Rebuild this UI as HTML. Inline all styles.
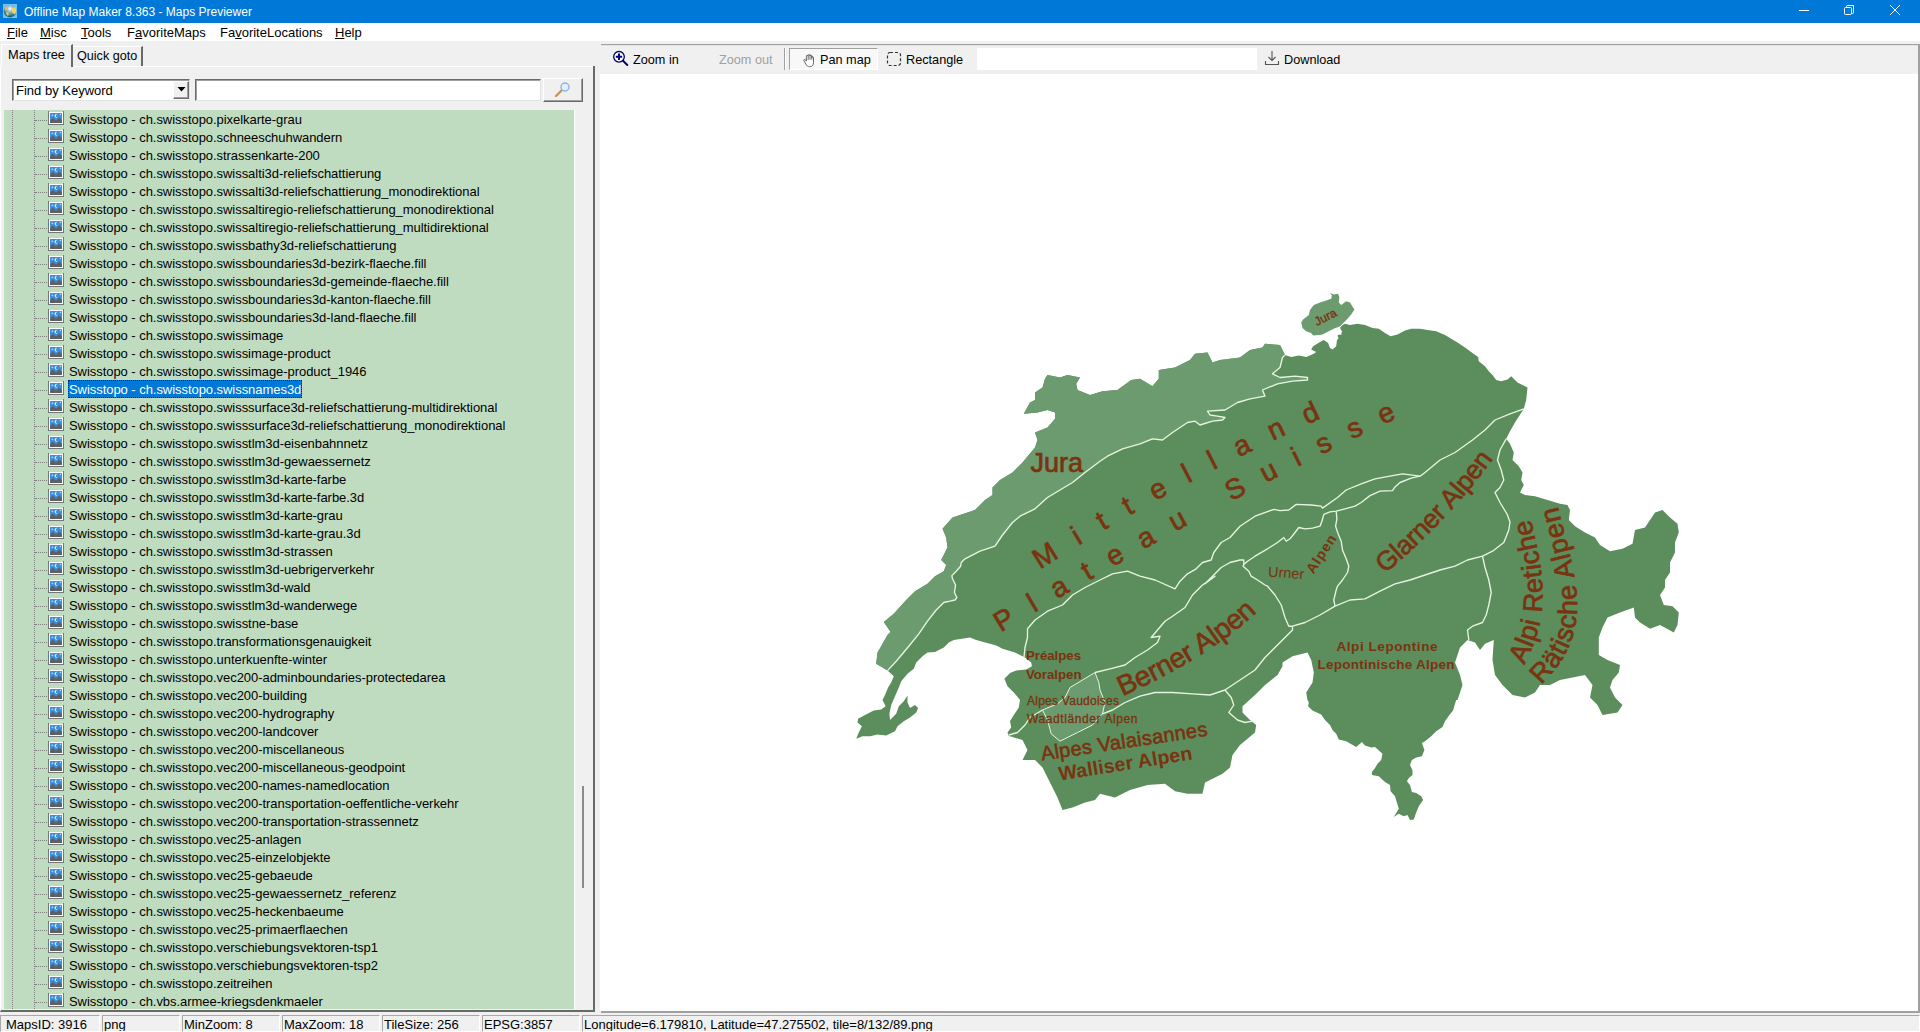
<!DOCTYPE html>
<html><head><meta charset="utf-8"><title>Offline Map Maker 8.363 - Maps Previewer</title>
<style>
html,body{margin:0;padding:0;}
body{width:1920px;height:1032px;overflow:hidden;background:#f0f0f0;font-family:"Liberation Sans",sans-serif;font-size:13px;color:#000;position:relative;}
.abs{position:absolute;}
#title{left:0;top:0;width:1920px;height:23px;background:#0078d7;color:#fff;}
#title .t{position:absolute;left:24px;top:5px;font-size:12px;white-space:nowrap;}
#menu{left:0;top:23px;width:1920px;height:18px;background:#fff;}
#menu span{position:absolute;top:2px;white-space:nowrap;font-size:13px;}
#menu u{text-decoration:underline;}
.row{position:absolute;left:0;width:570px;height:18px;white-space:nowrap;}
.row .ic{position:absolute;left:44px;top:1px;}
.row .hl{position:absolute;left:31px;top:10px;width:12px;height:0;border-top:1px dotted #808080;}
.row .lbl{letter-spacing:-0.05px;position:absolute;left:64px;top:0;height:18px;line-height:20px;overflow:hidden;padding:0 1px;font-size:13px;}
.row .lbl.sel{background:#0078d7;color:#fff;outline:1px dotted #223;outline-offset:-1px;}
#status span{position:absolute;top:2px;white-space:nowrap;font-size:13px;}
.sep{position:absolute;top:1016px;width:1px;height:15px;background:#d0d0d0;}
</style></head><body>
<svg width="0" height="0" style="position:absolute"><defs>
<g id="pic"><rect x="0.5" y="0.5" width="15" height="13" fill="#fbfdff" stroke="#747678"/><path d="M1 0.500 H15" stroke="#c4d4d8" stroke-width="1"/><rect x="2" y="2" width="12" height="10" fill="#3e8dd6"/><path d="M2 12 L2 9.800 L4.800 6.400 L8 9.800 L9.600 8.200 L11.200 6.400 L14 9.600 L14 12 Z" fill="#5c6063"/><path d="M9.600 3 A2 2 0 1 0 9.600 6.400 A1.500 1.500 0 1 1 9.600 3 Z" fill="#c8ecff"/><rect x="3.500" y="3.500" width="1.600" height="1.600" fill="#8fd0ff" transform="rotate(45 4.300 4.300)"/><rect x="11.800" y="2.800" width="1.400" height="1.400" fill="#a8dcff"/></g>
</defs></svg>

<div id="title" class="abs"><span class="t">Offline Map Maker 8.363 - Maps Previewer</span>
<svg class="abs" style="left:3px;top:4px" width="14" height="14" viewBox="0 0 14 14"><defs><radialGradient id="gl" cx="0.5" cy="0.3" r="0.65"><stop offset="0" stop-color="#ffffff"/><stop offset="0.35" stop-color="#8cc4e8"/><stop offset="1" stop-color="#1d5c78"/></radialGradient></defs><rect width="14" height="14" fill="#6fc2f2"/><circle cx="7" cy="7.200" r="6.200" fill="url(#gl)"/><path d="M1.500 3.500 L4.500 2 L5.500 4 L3.500 6.500 L1.500 6 Z" fill="#f0b458"/><path d="M9 4 L12.500 3 L13.300 7 L12 10.500 L9.500 9 L8.800 6 Z" fill="#f6d458"/><path d="M3.500 8 L5.500 8.500 L5.800 11 L4.500 11.800 L3 10 Z" fill="#d8cc58"/></svg>
<svg class="abs" style="left:1780px;top:0" width="140" height="23" viewBox="0 0 140 23"><g stroke="#fff" stroke-width="1" fill="none"><path d="M19 10.5 H29"/><rect x="64.5" y="7.5" width="7" height="7" rx="1"/><path d="M66.5 7.5 V6.5 a1 1 0 0 1 1 -1 H73.500 V12.500 a1 1 0 0 1 -1 1 H71.500"/><path d="M110 5 L120 15 M120 5 L110 15"/></g></svg>
</div>
<div id="menu" class="abs">
<span style="left:7px"><u>F</u>ile</span><span style="left:40px"><u>M</u>isc</span><span style="left:81px"><u>T</u>ools</span><span style="left:127px">F<u>a</u>voriteMaps</span><span style="left:220px">Fa<u>v</u>oriteLocations</span><span style="left:335px"><u>H</u>elp</span>
</div>

<!-- tabs -->
<div class="abs" style="left:1px;top:44px;width:72px;height:23px;background:#f0f0f0;border-right:2px solid #696969;box-sizing:border-box;border-left:1px solid #fff;border-top:1px solid #fff;"></div>
<span class="abs" style="left:8px;top:47px;font-size:12.8px;white-space:nowrap">Maps tree</span>
<div class="abs" style="left:73px;top:46px;width:70px;height:20px;box-sizing:border-box;border-right:2px solid #696969;border-top:1px solid #fff;"></div>
<span class="abs" style="left:77px;top:49px;font-size:12.6px;white-space:nowrap">Quick goto</span>

<!-- left panel frame -->
<div class="abs" style="left:0;top:66px;width:595px;height:946px;box-sizing:border-box;border-left:1px solid #fff;border-right:2px solid #696969;border-bottom:2px solid #696969;"></div>
<div class="abs" style="left:74px;top:66px;width:519px;height:1px;background:#fff"></div>

<!-- combo -->
<div class="abs" style="left:12px;top:79px;width:178px;height:22px;box-sizing:border-box;background:#fff;border:1px solid #696969;border-right-color:#e3e3e3;border-bottom-color:#e3e3e3;box-shadow:inset 1px 1px 0 #a0a0a0;"></div>
<span class="abs" style="left:16px;top:83px;font-size:13px;white-space:nowrap">Find by Keyword</span>
<div class="abs" style="left:173px;top:81px;width:16px;height:18px;box-sizing:border-box;background:#f0f0f0;border:1px solid #fff;border-right-color:#696969;border-bottom-color:#696969;box-shadow:inset -1px -1px 0 #a0a0a0;"></div>
<svg class="abs" style="left:177px;top:87px" width="9" height="5" viewBox="0 0 9 5"><path d="M0.5 0 H8.5 L4.5 4.5 Z" fill="#000"/></svg>
<!-- search input -->
<div class="abs" style="left:195px;top:79px;width:346px;height:22px;box-sizing:border-box;background:#fff;border:1px solid #696969;border-right-color:#e3e3e3;border-bottom-color:#e3e3e3;box-shadow:inset 1px 1px 0 #a0a0a0;"></div>
<!-- search btn -->
<div class="abs" style="left:543px;top:78px;width:40px;height:24px;box-sizing:border-box;background:#f0f0f0;border:1px solid #fff;border-right-color:#696969;border-bottom-color:#696969;box-shadow:inset -1px -1px 0 #a0a0a0;"></div>
<svg class="abs" style="left:554px;top:81px" width="18" height="18" viewBox="0 0 18 18"><path d="M2 15 L8 9" stroke="#c9945a" stroke-width="2.4" stroke-linecap="round"/><circle cx="11" cy="6" r="4" fill="#dff0ff" stroke="#8fb4e0" stroke-width="1.4"/></svg>

<!-- tree -->
<div id="tree" class="abs" style="left:4px;top:110px;width:570px;height:899px;background:#c0dcc0;overflow:hidden;">
<div class="abs" style="left:8px;top:0;width:0;height:899px;border-left:1px dotted #808080"></div>
<div class="abs" style="left:30px;top:0;width:0;height:899px;border-left:1px dotted #808080"></div>
<div class="row" style="top:0px"><i class="hl"></i><svg class="ic" width="16" height="14" viewBox="0 0 16 14"><use href="#pic"/></svg><span class="lbl">Swisstopo - ch.swisstopo.pixelkarte-grau</span></div>
<div class="row" style="top:18px"><i class="hl"></i><svg class="ic" width="16" height="14" viewBox="0 0 16 14"><use href="#pic"/></svg><span class="lbl">Swisstopo - ch.swisstopo.schneeschuhwandern</span></div>
<div class="row" style="top:36px"><i class="hl"></i><svg class="ic" width="16" height="14" viewBox="0 0 16 14"><use href="#pic"/></svg><span class="lbl">Swisstopo - ch.swisstopo.strassenkarte-200</span></div>
<div class="row" style="top:54px"><i class="hl"></i><svg class="ic" width="16" height="14" viewBox="0 0 16 14"><use href="#pic"/></svg><span class="lbl">Swisstopo - ch.swisstopo.swissalti3d-reliefschattierung</span></div>
<div class="row" style="top:72px"><i class="hl"></i><svg class="ic" width="16" height="14" viewBox="0 0 16 14"><use href="#pic"/></svg><span class="lbl">Swisstopo - ch.swisstopo.swissalti3d-reliefschattierung_monodirektional</span></div>
<div class="row" style="top:90px"><i class="hl"></i><svg class="ic" width="16" height="14" viewBox="0 0 16 14"><use href="#pic"/></svg><span class="lbl">Swisstopo - ch.swisstopo.swissaltiregio-reliefschattierung_monodirektional</span></div>
<div class="row" style="top:108px"><i class="hl"></i><svg class="ic" width="16" height="14" viewBox="0 0 16 14"><use href="#pic"/></svg><span class="lbl">Swisstopo - ch.swisstopo.swissaltiregio-reliefschattierung_multidirektional</span></div>
<div class="row" style="top:126px"><i class="hl"></i><svg class="ic" width="16" height="14" viewBox="0 0 16 14"><use href="#pic"/></svg><span class="lbl">Swisstopo - ch.swisstopo.swissbathy3d-reliefschattierung</span></div>
<div class="row" style="top:144px"><i class="hl"></i><svg class="ic" width="16" height="14" viewBox="0 0 16 14"><use href="#pic"/></svg><span class="lbl">Swisstopo - ch.swisstopo.swissboundaries3d-bezirk-flaeche.fill</span></div>
<div class="row" style="top:162px"><i class="hl"></i><svg class="ic" width="16" height="14" viewBox="0 0 16 14"><use href="#pic"/></svg><span class="lbl">Swisstopo - ch.swisstopo.swissboundaries3d-gemeinde-flaeche.fill</span></div>
<div class="row" style="top:180px"><i class="hl"></i><svg class="ic" width="16" height="14" viewBox="0 0 16 14"><use href="#pic"/></svg><span class="lbl">Swisstopo - ch.swisstopo.swissboundaries3d-kanton-flaeche.fill</span></div>
<div class="row" style="top:198px"><i class="hl"></i><svg class="ic" width="16" height="14" viewBox="0 0 16 14"><use href="#pic"/></svg><span class="lbl">Swisstopo - ch.swisstopo.swissboundaries3d-land-flaeche.fill</span></div>
<div class="row" style="top:216px"><i class="hl"></i><svg class="ic" width="16" height="14" viewBox="0 0 16 14"><use href="#pic"/></svg><span class="lbl">Swisstopo - ch.swisstopo.swissimage</span></div>
<div class="row" style="top:234px"><i class="hl"></i><svg class="ic" width="16" height="14" viewBox="0 0 16 14"><use href="#pic"/></svg><span class="lbl">Swisstopo - ch.swisstopo.swissimage-product</span></div>
<div class="row" style="top:252px"><i class="hl"></i><svg class="ic" width="16" height="14" viewBox="0 0 16 14"><use href="#pic"/></svg><span class="lbl">Swisstopo - ch.swisstopo.swissimage-product_1946</span></div>
<div class="row" style="top:270px"><i class="hl"></i><svg class="ic" width="16" height="14" viewBox="0 0 16 14"><use href="#pic"/></svg><span class="lbl sel">Swisstopo - ch.swisstopo.swissnames3d</span></div>
<div class="row" style="top:288px"><i class="hl"></i><svg class="ic" width="16" height="14" viewBox="0 0 16 14"><use href="#pic"/></svg><span class="lbl">Swisstopo - ch.swisstopo.swisssurface3d-reliefschattierung-multidirektional</span></div>
<div class="row" style="top:306px"><i class="hl"></i><svg class="ic" width="16" height="14" viewBox="0 0 16 14"><use href="#pic"/></svg><span class="lbl">Swisstopo - ch.swisstopo.swisssurface3d-reliefschattierung_monodirektional</span></div>
<div class="row" style="top:324px"><i class="hl"></i><svg class="ic" width="16" height="14" viewBox="0 0 16 14"><use href="#pic"/></svg><span class="lbl">Swisstopo - ch.swisstopo.swisstlm3d-eisenbahnnetz</span></div>
<div class="row" style="top:342px"><i class="hl"></i><svg class="ic" width="16" height="14" viewBox="0 0 16 14"><use href="#pic"/></svg><span class="lbl">Swisstopo - ch.swisstopo.swisstlm3d-gewaessernetz</span></div>
<div class="row" style="top:360px"><i class="hl"></i><svg class="ic" width="16" height="14" viewBox="0 0 16 14"><use href="#pic"/></svg><span class="lbl">Swisstopo - ch.swisstopo.swisstlm3d-karte-farbe</span></div>
<div class="row" style="top:378px"><i class="hl"></i><svg class="ic" width="16" height="14" viewBox="0 0 16 14"><use href="#pic"/></svg><span class="lbl">Swisstopo - ch.swisstopo.swisstlm3d-karte-farbe.3d</span></div>
<div class="row" style="top:396px"><i class="hl"></i><svg class="ic" width="16" height="14" viewBox="0 0 16 14"><use href="#pic"/></svg><span class="lbl">Swisstopo - ch.swisstopo.swisstlm3d-karte-grau</span></div>
<div class="row" style="top:414px"><i class="hl"></i><svg class="ic" width="16" height="14" viewBox="0 0 16 14"><use href="#pic"/></svg><span class="lbl">Swisstopo - ch.swisstopo.swisstlm3d-karte-grau.3d</span></div>
<div class="row" style="top:432px"><i class="hl"></i><svg class="ic" width="16" height="14" viewBox="0 0 16 14"><use href="#pic"/></svg><span class="lbl">Swisstopo - ch.swisstopo.swisstlm3d-strassen</span></div>
<div class="row" style="top:450px"><i class="hl"></i><svg class="ic" width="16" height="14" viewBox="0 0 16 14"><use href="#pic"/></svg><span class="lbl">Swisstopo - ch.swisstopo.swisstlm3d-uebrigerverkehr</span></div>
<div class="row" style="top:468px"><i class="hl"></i><svg class="ic" width="16" height="14" viewBox="0 0 16 14"><use href="#pic"/></svg><span class="lbl">Swisstopo - ch.swisstopo.swisstlm3d-wald</span></div>
<div class="row" style="top:486px"><i class="hl"></i><svg class="ic" width="16" height="14" viewBox="0 0 16 14"><use href="#pic"/></svg><span class="lbl">Swisstopo - ch.swisstopo.swisstlm3d-wanderwege</span></div>
<div class="row" style="top:504px"><i class="hl"></i><svg class="ic" width="16" height="14" viewBox="0 0 16 14"><use href="#pic"/></svg><span class="lbl">Swisstopo - ch.swisstopo.swisstne-base</span></div>
<div class="row" style="top:522px"><i class="hl"></i><svg class="ic" width="16" height="14" viewBox="0 0 16 14"><use href="#pic"/></svg><span class="lbl">Swisstopo - ch.swisstopo.transformationsgenauigkeit</span></div>
<div class="row" style="top:540px"><i class="hl"></i><svg class="ic" width="16" height="14" viewBox="0 0 16 14"><use href="#pic"/></svg><span class="lbl">Swisstopo - ch.swisstopo.unterkuenfte-winter</span></div>
<div class="row" style="top:558px"><i class="hl"></i><svg class="ic" width="16" height="14" viewBox="0 0 16 14"><use href="#pic"/></svg><span class="lbl">Swisstopo - ch.swisstopo.vec200-adminboundaries-protectedarea</span></div>
<div class="row" style="top:576px"><i class="hl"></i><svg class="ic" width="16" height="14" viewBox="0 0 16 14"><use href="#pic"/></svg><span class="lbl">Swisstopo - ch.swisstopo.vec200-building</span></div>
<div class="row" style="top:594px"><i class="hl"></i><svg class="ic" width="16" height="14" viewBox="0 0 16 14"><use href="#pic"/></svg><span class="lbl">Swisstopo - ch.swisstopo.vec200-hydrography</span></div>
<div class="row" style="top:612px"><i class="hl"></i><svg class="ic" width="16" height="14" viewBox="0 0 16 14"><use href="#pic"/></svg><span class="lbl">Swisstopo - ch.swisstopo.vec200-landcover</span></div>
<div class="row" style="top:630px"><i class="hl"></i><svg class="ic" width="16" height="14" viewBox="0 0 16 14"><use href="#pic"/></svg><span class="lbl">Swisstopo - ch.swisstopo.vec200-miscellaneous</span></div>
<div class="row" style="top:648px"><i class="hl"></i><svg class="ic" width="16" height="14" viewBox="0 0 16 14"><use href="#pic"/></svg><span class="lbl">Swisstopo - ch.swisstopo.vec200-miscellaneous-geodpoint</span></div>
<div class="row" style="top:666px"><i class="hl"></i><svg class="ic" width="16" height="14" viewBox="0 0 16 14"><use href="#pic"/></svg><span class="lbl">Swisstopo - ch.swisstopo.vec200-names-namedlocation</span></div>
<div class="row" style="top:684px"><i class="hl"></i><svg class="ic" width="16" height="14" viewBox="0 0 16 14"><use href="#pic"/></svg><span class="lbl">Swisstopo - ch.swisstopo.vec200-transportation-oeffentliche-verkehr</span></div>
<div class="row" style="top:702px"><i class="hl"></i><svg class="ic" width="16" height="14" viewBox="0 0 16 14"><use href="#pic"/></svg><span class="lbl">Swisstopo - ch.swisstopo.vec200-transportation-strassennetz</span></div>
<div class="row" style="top:720px"><i class="hl"></i><svg class="ic" width="16" height="14" viewBox="0 0 16 14"><use href="#pic"/></svg><span class="lbl">Swisstopo - ch.swisstopo.vec25-anlagen</span></div>
<div class="row" style="top:738px"><i class="hl"></i><svg class="ic" width="16" height="14" viewBox="0 0 16 14"><use href="#pic"/></svg><span class="lbl">Swisstopo - ch.swisstopo.vec25-einzelobjekte</span></div>
<div class="row" style="top:756px"><i class="hl"></i><svg class="ic" width="16" height="14" viewBox="0 0 16 14"><use href="#pic"/></svg><span class="lbl">Swisstopo - ch.swisstopo.vec25-gebaeude</span></div>
<div class="row" style="top:774px"><i class="hl"></i><svg class="ic" width="16" height="14" viewBox="0 0 16 14"><use href="#pic"/></svg><span class="lbl">Swisstopo - ch.swisstopo.vec25-gewaessernetz_referenz</span></div>
<div class="row" style="top:792px"><i class="hl"></i><svg class="ic" width="16" height="14" viewBox="0 0 16 14"><use href="#pic"/></svg><span class="lbl">Swisstopo - ch.swisstopo.vec25-heckenbaeume</span></div>
<div class="row" style="top:810px"><i class="hl"></i><svg class="ic" width="16" height="14" viewBox="0 0 16 14"><use href="#pic"/></svg><span class="lbl">Swisstopo - ch.swisstopo.vec25-primaerflaechen</span></div>
<div class="row" style="top:828px"><i class="hl"></i><svg class="ic" width="16" height="14" viewBox="0 0 16 14"><use href="#pic"/></svg><span class="lbl">Swisstopo - ch.swisstopo.verschiebungsvektoren-tsp1</span></div>
<div class="row" style="top:846px"><i class="hl"></i><svg class="ic" width="16" height="14" viewBox="0 0 16 14"><use href="#pic"/></svg><span class="lbl">Swisstopo - ch.swisstopo.verschiebungsvektoren-tsp2</span></div>
<div class="row" style="top:864px"><i class="hl"></i><svg class="ic" width="16" height="14" viewBox="0 0 16 14"><use href="#pic"/></svg><span class="lbl">Swisstopo - ch.swisstopo.zeitreihen</span></div>
<div class="row" style="top:882px"><i class="hl"></i><svg class="ic" width="16" height="14" viewBox="0 0 16 14"><use href="#pic"/></svg><span class="lbl">Swisstopo - ch.vbs.armee-kriegsdenkmaeler</span></div>
</div>
<!-- scrollbar -->
<div class="abs" style="left:574px;top:110px;width:18px;height:899px;background:#f0f0f0"></div>
<div class="abs" style="left:574px;top:110px;width:1px;height:899px;background:#fff"></div>
<div class="abs" style="left:582px;top:786px;width:2px;height:102px;background:#8a8a8a"></div>

<!-- right panel -->
<div class="abs" style="left:601px;top:44px;width:1319px;height:1px;background:#a0a0a0"></div>
<div class="abs" style="left:601px;top:45px;width:1319px;height:1px;background:#e3e3e3"></div>
<div class="abs" style="left:600px;top:74px;width:1319px;height:937px;background:#fff"></div>
<div class="abs" style="left:1918px;top:45px;width:2px;height:968px;background:#a0a0a0"></div>
<div class="abs" style="left:601px;top:1011px;width:1319px;height:2px;background:#a0a0a0"></div>

<!-- toolbar -->
<span class="abs" style="left:633px;top:53px;white-space:nowrap;font-size:12.7px">Zoom in</span>
<span class="abs" style="left:719px;top:53px;white-space:nowrap;color:#a0a0a0;font-size:12.7px">Zoom out</span>
<div class="abs" style="left:784px;top:48px;width:1px;height:22px;background:#a0a0a0"></div>
<div class="abs" style="left:785px;top:48px;width:1px;height:22px;background:#fff"></div>
<div class="abs" style="left:789px;top:48px;width:89px;height:22px;box-sizing:border-box;background:#f8f8f8;border:1px solid #a0a0a0;border-right-color:#fff;border-bottom-color:#fff;"></div>
<span class="abs" style="left:820px;top:53px;white-space:nowrap;font-size:12.7px">Pan map</span>
<span class="abs" style="left:906px;top:53px;white-space:nowrap;font-size:12.7px">Rectangle</span>
<div class="abs" style="left:977px;top:48px;width:280px;height:22px;background:#fff"></div>
<span class="abs" style="left:1284px;top:53px;white-space:nowrap;font-size:12.7px">Download</span>
<svg class="abs" style="left:612px;top:50px" width="18" height="18" viewBox="0 0 18 18"><circle cx="7" cy="6.800" r="5.300" fill="#fff" stroke="#00005a" stroke-width="1.300"/><path d="M3.800 6.800 H10.200 M7 3.600 V10" stroke="#000080" stroke-width="2"/><path d="M11 10.800 L15.300 15" stroke="#00005a" stroke-width="1.900" stroke-linecap="round"/></svg>
<svg class="abs" style="left:803px;top:53.500px" width="12" height="13.500" viewBox="0 0 12 13.500"><path d="M3.400 7 V2.200 a0.900 0.900 0 0 1 1.800 0 V1.500 a0.900 0.900 0 0 1 1.800 0 V2 a0.900 0.900 0 0 1 1.800 0 V3.600 a0.850 0.850 0 0 1 1.700 0 V8.500 C10.500 11 9 12.800 6.800 12.800 C4.800 12.800 3.800 11.800 2.800 10 L0.800 6.600 C0.400 5.700 1.500 5.100 2.100 5.800 Z" fill="#fff" stroke="#4a4a4a" stroke-width="0.850" stroke-linejoin="round"/><path d="M5.200 2.200 V5.800 M7 1.600 V5.800 M8.800 2.200 V5.800" fill="none" stroke="#4a4a4a" stroke-width="0.800"/></svg>
<svg class="abs" style="left:886px;top:51px" width="16" height="16" viewBox="0 0 16 16"><rect x="1.500" y="1.500" width="13" height="13" rx="2.500" fill="none" stroke="#333" stroke-width="1.200" stroke-dasharray="3 2"/></svg>
<svg class="abs" style="left:1264px;top:50px" width="16" height="16" viewBox="0 0 16 16"><path d="M8 1 V10 M4.500 7 L8 10.500 L11.500 7 M1.500 11 V14.500 H14.500 V11" fill="none" stroke="#555" stroke-width="1.100"/></svg>

<!-- map -->
<svg class="abs" style="left:0;top:0" width="1920" height="1032" viewBox="0 0 1920 1032" font-family="'Liberation Sans',sans-serif">
<path d="M887.5 670.6 L876.2 663.8 L877.5 652.5 L881.2 646.2 L887.5 635.0 L890.6 631.9 L883.8 621.9 L893.8 613.8 L906.2 600.0 L915.0 591.2 L927.5 583.8 L935.0 576.2 L943.8 571.2 L946.2 565.0 L941.2 560.0 L947.5 547.5 L946.2 537.5 L942.5 528.8 L952.5 517.5 L975.0 510.0 L985.0 500.0 L992.5 495.0 L992.5 487.5 L1000.0 480.0 L1012.5 472.5 L1022.5 462.5 L1035.0 447.5 L1037.5 440.0 L1035.0 432.5 L1047.5 427.5 L1055.0 418.8 L1055.0 412.5 L1047.5 410.0 L1037.5 412.5 L1023.8 413.8 L1030.0 402.5 L1035.0 400.0 L1035.0 392.5 L1042.5 387.5 L1045.0 378.8 L1047.5 375.0 L1060.0 377.5 L1067.5 375.0 L1080.0 377.5 L1076.2 383.8 L1077.5 390.0 L1090.0 395.0 L1102.5 391.2 L1117.5 390.0 L1131.2 380.0 L1140.0 378.8 L1152.5 386.2 L1158.8 378.8 L1158.8 370.0 L1175.0 367.5 L1190.0 360.0 L1195.0 353.8 L1207.5 352.5 L1212.5 362.5 L1220.0 360.0 L1240.0 357.5 L1250.0 350.0 L1262.5 347.5 L1265.0 343.8 L1280.0 345.0 L1285.0 355.0 L1291.2 356.9 L1298.8 355.6 L1306.2 356.9 L1313.8 353.8 L1316.2 351.9 L1311.2 349.4 L1313.1 346.2 L1320.0 341.9 L1323.8 340.0 L1328.1 343.1 L1330.0 348.1 L1332.5 349.4 L1336.2 346.2 L1336.9 340.6 L1338.5 338.1 L1337.5 335.6 L1339.4 334.4 L1341.2 335.0 L1341.9 331.2 L1340.0 328.1 L1342.5 325.0 L1345.0 323.8 L1350.0 325.0 L1357.5 323.8 L1365.0 325.0 L1372.5 328.1 L1378.8 328.8 L1385.0 333.1 L1390.6 336.2 L1397.5 334.4 L1405.0 330.6 L1411.2 328.8 L1420.0 328.8 L1427.5 330.0 L1436.2 331.2 L1445.0 335.0 L1451.2 338.8 L1457.5 342.5 L1465.0 347.5 L1472.5 353.1 L1478.1 356.9 L1478.8 361.2 L1485.0 366.2 L1488.8 371.2 L1492.5 375.0 L1496.2 380.0 L1501.2 381.2 L1507.5 379.4 L1511.2 376.2 L1517.5 382.5 L1527.5 387.5 L1526.2 400.0 L1523.8 408.8 L1515.0 422.5 L1510.0 431.2 L1506.2 438.8 L1510.0 443.8 L1513.8 452.5 L1512.5 460.0 L1518.8 466.2 L1522.5 472.5 L1521.2 480.0 L1523.8 485.0 L1520.0 492.5 L1525.0 495.0 L1535.0 496.2 L1547.5 500.0 L1560.0 503.8 L1567.5 505.0 L1570.0 510.0 L1568.8 520.0 L1575.0 526.2 L1585.0 532.5 L1595.0 537.5 L1600.0 545.0 L1610.0 551.2 L1622.5 548.8 L1632.5 543.8 L1635.0 530.0 L1645.0 527.5 L1650.0 520.0 L1655.0 512.5 L1662.5 510.0 L1670.0 517.5 L1677.5 523.8 L1678.8 532.5 L1675.0 542.5 L1675.0 552.5 L1670.0 562.5 L1670.0 572.5 L1665.0 580.0 L1665.0 587.5 L1660.0 595.0 L1663.8 605.0 L1672.5 606.2 L1678.8 612.5 L1677.5 625.0 L1673.8 632.5 L1660.0 625.0 L1650.0 628.8 L1640.0 622.5 L1635.0 617.5 L1633.8 607.5 L1620.0 612.5 L1607.5 617.5 L1602.5 627.5 L1598.8 637.5 L1598.8 655.0 L1607.5 660.0 L1620.0 665.0 L1618.8 672.5 L1612.5 680.0 L1610.0 687.5 L1615.0 697.5 L1622.5 705.0 L1617.5 712.5 L1602.5 715.0 L1597.5 705.0 L1590.0 697.5 L1592.5 685.0 L1585.0 675.0 L1572.5 677.5 L1560.0 680.0 L1550.0 685.0 L1540.0 685.0 L1535.0 692.5 L1525.0 697.5 L1512.5 695.0 L1502.5 685.0 L1495.0 675.0 L1492.5 660.0 L1493.8 640.0 L1485.0 643.8 L1480.0 650.0 L1475.0 642.5 L1467.5 640.0 L1460.0 647.5 L1457.5 655.0 L1455.0 662.5 L1460.0 675.0 L1462.5 685.0 L1457.5 700.0 L1456.2 700.0 L1455.0 703.8 L1453.1 710.6 L1449.4 715.0 L1445.0 721.2 L1442.5 726.9 L1436.2 731.2 L1431.2 736.2 L1425.0 741.2 L1421.9 743.1 L1424.4 750.0 L1421.9 756.2 L1416.2 757.5 L1411.9 760.0 L1410.0 765.0 L1412.5 770.6 L1412.5 775.0 L1408.8 778.1 L1406.9 781.2 L1410.0 785.0 L1411.9 791.9 L1416.2 793.1 L1421.2 796.2 L1423.1 800.0 L1418.8 806.2 L1416.2 812.5 L1413.8 819.4 L1410.0 820.0 L1407.5 815.0 L1403.8 816.2 L1398.8 813.8 L1393.8 816.9 L1398.8 808.8 L1396.9 802.5 L1395.0 796.2 L1390.6 791.2 L1390.0 785.0 L1385.0 781.9 L1378.8 776.2 L1371.9 775.0 L1371.9 771.9 L1375.0 768.1 L1377.5 763.8 L1381.2 760.0 L1382.5 753.8 L1375.0 746.9 L1371.2 747.5 L1365.0 745.6 L1361.9 741.9 L1356.2 746.9 L1346.2 741.2 L1338.8 739.4 L1336.2 733.8 L1332.5 730.0 L1330.0 725.0 L1325.0 720.0 L1321.2 714.4 L1312.5 710.6 L1308.1 706.2 L1308.8 702.5 L1307.5 700.0 L1306.2 692.5 L1312.5 682.5 L1313.8 672.5 L1311.2 660.0 L1307.5 652.5 L1292.5 656.2 L1282.5 662.5 L1282.5 666.2 L1277.5 675.0 L1265.0 685.0 L1255.0 695.0 L1242.5 706.2 L1242.5 712.5 L1250.0 720.0 L1256.2 725.0 L1255.0 732.5 L1240.0 745.0 L1232.5 755.0 L1230.0 767.5 L1222.5 773.8 L1205.0 782.5 L1202.5 793.8 L1187.5 793.8 L1175.0 791.2 L1165.0 783.8 L1147.5 785.0 L1130.0 790.0 L1115.0 797.5 L1100.0 793.8 L1095.0 800.0 L1085.0 802.5 L1072.5 807.5 L1062.5 810.0 L1057.5 797.5 L1052.5 787.5 L1047.5 777.5 L1042.5 767.5 L1035.0 760.0 L1022.5 760.0 L1027.5 750.0 L1022.5 740.0 L1010.0 736.2 L1008.8 736.2 L1007.5 732.5 L1011.2 727.5 L1010.0 721.2 L1013.8 715.0 L1018.8 707.5 L1020.0 700.0 L1015.0 693.8 L1007.5 686.2 L1004.4 678.8 L1010.0 673.1 L1016.2 670.6 L1026.2 669.4 L1031.9 666.2 L1031.2 662.5 L1025.0 657.5 L1015.0 652.5 L1002.5 648.8 L996.2 645.6 L990.0 643.8 L976.2 640.0 L970.0 637.5 L953.8 640.0 L948.8 642.5 L943.8 647.5 L935.0 651.9 L927.5 652.5 L922.5 656.2 L916.2 662.5 L913.8 668.8 L907.5 673.8 L901.2 681.2 L898.8 687.5 L895.0 696.2 L891.2 705.0 L889.4 713.8 L890.0 720.0 L896.2 713.8 L898.8 706.2 L903.8 701.2 L907.5 695.6 L907.5 702.5 L910.0 708.1 L915.0 705.0 L918.1 708.1 L916.2 712.5 L910.0 717.5 L903.8 721.2 L897.5 726.2 L895.0 731.2 L886.2 735.6 L877.5 734.4 L870.0 736.2 L862.5 736.2 L856.2 738.8 L858.8 732.5 L861.9 726.2 L857.5 722.5 L858.1 718.8 L865.0 715.0 L873.8 710.6 L881.2 709.4 L885.6 706.2 L882.5 700.0 L885.0 695.0 L888.1 687.5 L891.2 682.5 L893.8 676.2 Z" fill="#5c8d5d"/>
<path d="M887.5 670.6 L876.2 663.8 L877.5 652.5 L881.2 646.2 L887.5 635.0 L890.6 631.9 L883.8 621.9 L893.8 613.8 L906.2 600.0 L915.0 591.2 L927.5 583.8 L935.0 576.2 L943.8 571.2 L946.2 565.0 L941.2 560.0 L947.5 547.5 L946.2 537.5 L942.5 528.8 L952.5 517.5 L975.0 510.0 L985.0 500.0 L992.5 495.0 L992.5 487.5 L1000.0 480.0 L1012.5 472.5 L1022.5 462.5 L1035.0 447.5 L1037.5 440.0 L1035.0 432.5 L1047.5 427.5 L1055.0 418.8 L1055.0 412.5 L1047.5 410.0 L1037.5 412.5 L1023.8 413.8 L1030.0 402.5 L1035.0 400.0 L1035.0 392.5 L1042.5 387.5 L1045.0 378.8 L1047.5 375.0 L1060.0 377.5 L1067.5 375.0 L1080.0 377.5 L1076.2 383.8 L1077.5 390.0 L1090.0 395.0 L1102.5 391.2 L1117.5 390.0 L1131.2 380.0 L1140.0 378.8 L1152.5 386.2 L1158.8 378.8 L1158.8 370.0 L1175.0 367.5 L1190.0 360.0 L1195.0 353.8 L1207.5 352.5 L1212.5 362.5 L1220.0 360.0 L1240.0 357.5 L1250.0 350.0 L1262.5 347.5 L1265.0 343.8 L1280.0 345.0 L1285.0 355.0 L1282.5 357.5 L1280.0 367.5 L1272.5 373.8 L1280.0 377.5 L1295.0 376.2 L1307.5 377.5 L1307.5 380.0 L1292.5 381.2 L1277.5 383.8 L1262.5 390.0 L1265.0 396.2 L1250.0 398.8 L1237.5 402.5 L1225.0 410.0 L1207.5 411.2 L1210.0 415.0 L1217.5 416.2 L1225.0 417.5 L1222.5 420.0 L1212.5 421.2 L1200.0 425.0 L1195.0 421.2 L1187.5 422.5 L1172.5 432.5 L1162.5 440.0 L1152.5 438.8 L1140.0 443.8 L1122.5 448.8 L1107.5 456.2 L1100.0 461.2 L1085.0 472.5 L1072.5 482.5 L1060.0 490.0 L1047.5 497.5 L1035.0 508.8 L1020.0 516.2 L1012.5 522.5 L1002.5 535.0 L995.0 546.2 L980.0 551.2 L965.0 558.8 L961.2 562.5 L960.6 566.2 L956.2 571.2 L951.9 575.6 L952.5 578.8 L955.6 585.0 L954.4 592.5 L956.9 597.5 L955.0 600.0 L950.0 601.2 L943.8 602.5 L936.2 610.0 L927.5 621.2 L918.8 633.8 L908.8 646.2 L896.2 661.2 L887.5 670.6 Z" fill="#6c9b70"/>
<path d="M1301.2 322.5 L1303.1 319.4 L1308.8 315.0 L1310.0 310.0 L1313.8 305.0 L1320.0 302.5 L1326.2 300.6 L1331.2 298.8 L1331.9 295.6 L1330.0 293.1 L1333.8 294.4 L1338.1 293.8 L1339.4 297.5 L1338.8 302.5 L1341.2 305.0 L1346.2 301.2 L1350.0 302.5 L1354.4 309.4 L1351.2 314.4 L1347.5 318.8 L1343.8 322.5 L1340.0 326.2 L1333.8 328.8 L1328.8 331.2 L1322.5 334.4 L1318.8 335.0 L1313.1 335.6 L1311.2 333.1 L1306.2 331.2 L1302.5 328.1 Z" fill="#6c9b70"/>
<path d="M1095.0 672.5 L1098.8 682.5 L1100.0 690.0 L1105.0 702.5 L1102.5 713.8 L1092.5 725.0 L1077.5 732.5 L1060.0 741.2 L1051.2 733.8 L1047.5 720.0 L1042.5 710.0 L1057.5 703.8 L1065.0 697.5 L1070.0 687.5 L1082.5 680.0 Z" fill="#6c9b70" stroke="#e6f5e0" stroke-width="1"/>
<g fill="none" stroke="#e6f5e0" stroke-width="1.35" stroke-linejoin="round">
<path d="M887.5 670.6 L896.2 661.2 L908.8 646.2 L918.8 633.8 L927.5 621.2 L936.2 610.0 L943.8 602.5 L950.0 601.2 L955.0 600.0 L956.9 597.5 L954.4 592.5 L955.6 585.0 L952.5 578.8 L951.9 575.6 L956.2 571.2 L960.6 566.2 L961.2 562.5 L965.0 558.8 L980.0 551.2 L995.0 546.2 L1002.5 535.0 L1012.5 522.5 L1020.0 516.2 L1035.0 508.8 L1047.5 497.5 L1060.0 490.0 L1072.5 482.5 L1085.0 472.5 L1100.0 461.2 L1107.5 456.2 L1122.5 448.8 L1140.0 443.8 L1152.5 438.8 L1162.5 440.0 L1172.5 432.5 L1187.5 422.5 L1195.0 421.2 L1200.0 425.0 L1212.5 421.2 L1222.5 420.0 L1225.0 417.5 L1217.5 416.2 L1210.0 415.0 L1207.5 411.2 L1225.0 410.0 L1237.5 402.5 L1250.0 398.8 L1265.0 396.2 L1262.5 390.0 L1277.5 383.8 L1292.5 381.2 L1307.5 380.0 L1307.5 377.5 L1295.0 376.2 L1280.0 377.5 L1272.5 373.8 L1280.0 367.5 L1282.5 357.5 L1285.0 355.0"/>
<path d="M1523.8 408.8 L1510.0 413.8 L1495.0 420.0 L1485.0 430.0 L1472.5 440.0 L1455.0 452.5 L1440.0 460.0 L1425.0 472.5 L1420.0 476.2 L1402.5 473.8 L1392.5 475.6 L1375.0 478.8 L1361.2 483.8 L1346.2 490.0 L1337.5 497.5 L1322.5 508.1 L1321.2 506.2 L1311.2 505.0 L1296.2 504.4 L1288.8 510.0 L1280.0 510.6 L1273.8 509.4 L1255.0 516.2 L1240.0 526.2 L1230.0 537.5 L1221.2 542.5 L1213.8 552.5 L1211.2 560.0 L1202.5 562.5 L1196.2 568.8 L1187.5 573.8 L1180.0 581.2 L1175.0 588.8 L1155.0 580.0 L1140.0 576.2 L1127.5 571.2 L1112.5 573.8 L1100.0 580.0 L1085.0 587.5 L1072.5 595.0 L1062.5 605.0 L1047.5 611.2 L1035.0 620.0 L1027.5 628.8 L1027.5 637.5 L1025.0 647.5 L1024.0 657.0"/>
<path d="M1420.0 476.2 L1411.2 478.1 L1400.0 482.5 L1395.0 486.9 L1392.5 490.6 L1380.0 491.2 L1370.0 495.6 L1361.2 502.5 L1355.0 506.2 L1345.0 508.8 L1336.2 511.2 L1330.0 511.9 L1323.8 514.4 L1321.9 521.2 L1320.0 526.2 L1312.5 528.1 L1305.0 528.8 L1298.8 527.5 L1295.0 532.5 L1290.0 538.8 L1286.2 541.2 L1283.8 537.5 L1277.5 542.5 L1267.5 548.8 L1255.0 556.2 L1247.5 561.2 L1243.8 564.4 L1243.8 560.0 L1240.0 560.0 L1230.0 562.5 L1221.2 567.5 L1212.5 576.2 L1205.0 583.8 L1215.0 576.2 L1202.5 585.0 L1192.5 595.0 L1185.0 607.5 L1172.5 616.2 L1165.0 621.2 L1157.5 630.0 L1151.2 637.5 L1160.0 636.2 L1157.5 642.5 L1147.5 650.0 L1135.0 657.5 L1125.0 665.0 L1110.0 668.8 L1095.0 672.5"/>
<path d="M1336.2 511.2 L1336.9 518.8 L1335.6 526.2 L1338.1 533.8 L1341.2 541.2 L1342.5 550.0 L1346.2 558.8 L1348.8 566.2 L1347.5 572.5 L1342.5 580.0 L1337.5 586.2 L1336.2 590.0 L1333.8 600.0 L1335.0 606.2"/>
<path d="M1243.8 564.4 L1243.1 566.2 L1248.8 571.2 L1251.2 576.2 L1257.5 580.0 L1265.0 585.0 L1267.5 586.2 L1275.0 595.0 L1281.2 605.0 L1285.0 617.5 L1288.8 626.2 L1292.5 626.2"/>
<path d="M1292.5 626.2 L1305.0 622.5 L1320.0 615.0 L1335.0 606.2 L1350.0 600.0 L1365.0 598.8 L1380.0 591.2 L1395.0 583.8 L1410.0 580.0 L1425.0 575.0 L1440.0 570.0 L1455.0 566.2 L1467.5 560.0 L1482.5 556.2"/>
<path d="M1506.2 438.8 L1500.0 450.0 L1497.5 460.0 L1501.2 470.0 L1503.8 480.0 L1500.0 487.5 L1495.0 492.5 L1500.0 502.5 L1507.0 514.0 L1510.0 522.0 L1508.8 530.0 L1503.8 542.5 L1492.5 551.2 L1482.5 556.2"/>
<path d="M1482.5 556.2 L1485.0 567.5 L1488.8 580.0 L1491.2 592.5 L1488.8 605.0 L1486.2 615.0 L1482.5 622.5 L1472.5 626.2 L1467.5 630.0 L1468.8 640.0"/>
<path d="M1292.5 626.2 L1292.5 630.0 L1280.0 642.5 L1265.0 657.5 L1255.0 670.0 L1240.0 680.0 L1225.0 690.0 L1210.0 695.0 L1192.5 693.8 L1172.5 692.5 L1155.0 692.5 L1140.0 696.2 L1125.0 702.5 L1112.5 710.0 L1102.5 713.8"/>
<path d="M1225.0 690.0 L1231.2 697.5 L1233.8 705.0 L1228.8 712.5 L1237.5 720.0 L1245.0 722.5 L1252.5 721.2"/>
<path d="M1042.5 710.0 L1030.0 717.5 L1025.0 725.0 L1017.5 732.5 L1008.8 735.0"/>
</g>
<g fill="#7a3310">
<text x="1030.5" y="472" font-size="27" font-weight="normal" text-anchor="start" stroke="#7a3310" stroke-width="0.7">Jura</text>
<text x="1317" y="326" font-size="12" font-weight="normal" text-anchor="start" stroke="#7a3310" stroke-width="0.4" transform="rotate(-27 1317 326)">Jura</text>
<path id="pMitt" d="M1040.2 569.6 Q1168 487.5 1321.3 418.1 L1348.4 405.2" fill="none" stroke="none"/><text font-size="28" font-weight="normal" stroke="#7a3310" stroke-width="0.7" letter-spacing="22.2"><textPath href="#pMitt">Mittelland</textPath></text>
<path id="pPlat" d="M1000.6 632.7 Q1221.8 499.8 1396.5 418.3 L1423.7 405.6" fill="none" stroke="none"/><text font-size="28" font-weight="normal" stroke="#7a3310" stroke-width="0.7" letter-spacing="20.3"><textPath href="#pPlat">Plateau Suisse</textPath></text>
<path id="pBerner" d="M1122.5 696.2 Q1207.5 658.4 1258.1 611.2" fill="none" stroke="none"/><text font-size="28" font-weight="normal" stroke="#7a3310" stroke-width="0.7"><textPath href="#pBerner" textLength="159.5" lengthAdjust="spacing">Berner Alpen</textPath></text>
<path id="pGlarner" d="M1384.9 573.8 Q1448.5 520.4 1493.9 457.9" fill="none" stroke="none"/><text font-size="26.5" font-weight="normal" stroke="#7a3310" stroke-width="0.7"><textPath href="#pGlarner" textLength="158.5" lengthAdjust="spacing">Glarner Alpen</textPath></text>
<path id="pRetiche" d="M1524 665 C1545 625 1550 590 1530 518" fill="none" stroke="none"/><text font-size="27" font-weight="normal" stroke="#7a3310" stroke-width="0.7"><textPath href="#pRetiche" textLength="150.5" lengthAdjust="spacing">Alpi Retiche</textPath></text>
<path id="pRaet" d="M1541 685 C1599.1 629.3 1573.4 574 1557.5 505" fill="none" stroke="none"/><text font-size="27" font-weight="normal" stroke="#7a3310" stroke-width="0.7"><textPath href="#pRaet" textLength="191.5" lengthAdjust="spacing">Rätische Alpen</textPath></text>
<text x="1267.7" y="576.5" font-size="14.5" font-weight="normal" text-anchor="start" transform="rotate(4 1267.7 576.5)">Urner</text>
<text x="1313.5" y="574.5" font-size="14" font-weight="bold" text-anchor="start" letter-spacing="1.0" transform="rotate(-57 1313.5 574.5)">Alpen</text>
<text x="1336.5" y="650.5" font-size="13.5" font-weight="bold" text-anchor="start" textLength="101" lengthAdjust="spacing">Alpi Lepontine</text>
<text x="1317.5" y="668.8" font-size="13.5" font-weight="bold" text-anchor="start" textLength="137" lengthAdjust="spacing">Lepontinische Alpen</text>
<text x="1026" y="659.5" font-size="13.2" font-weight="bold" text-anchor="start">Préalpes</text>
<text x="1026" y="679" font-size="13.2" font-weight="bold" text-anchor="start">Voralpen</text>
<text x="1027" y="705" font-size="12" font-weight="normal" text-anchor="start" stroke="#7a3310" stroke-width="0.3" textLength="92" lengthAdjust="spacing">Alpes Vaudoises</text>
<text x="1027" y="722.5" font-size="12" font-weight="normal" text-anchor="start" stroke="#7a3310" stroke-width="0.3" textLength="110.5" lengthAdjust="spacing">Waadtländer Alpen</text>
<text x="1041.9" y="760.6" font-size="20" font-weight="normal" text-anchor="start" stroke="#7a3310" stroke-width="0.6" textLength="168" lengthAdjust="spacing" transform="rotate(-8.55 1041.9 760.6)">Alpes Valaisannes</text>
<text x="1059.7" y="780.6" font-size="19.5" font-weight="bold" text-anchor="start" textLength="135" lengthAdjust="spacing" transform="rotate(-9.06 1059.7 780.6)">Walliser Alpen</text>
</g>
</svg>

<!-- status bar -->
<div id="status" class="abs" style="left:0;top:1015px;width:1920px;height:18px;">
<span style="left:6px">MapsID: 3916</span><span style="left:104px">png</span><span style="left:184px">MinZoom: 8</span><span style="left:284px">MaxZoom: 18</span><span style="left:384px">TileSize: 256</span><span style="left:484px">EPSG:3857</span><span style="left:584px">Longitude=6.179810, Latitude=47.275502, tile=8/132/89.png</span>
</div>
<div class="abs" style="left:0px;top:1015px;width:100px;height:17px;box-sizing:border-box;border:1px solid;border-color:#a8a8a8 #fff #fff #a8a8a8;"></div><div class="abs" style="left:102px;top:1015px;width:78px;height:17px;box-sizing:border-box;border:1px solid;border-color:#a8a8a8 #fff #fff #a8a8a8;"></div><div class="abs" style="left:182px;top:1015px;width:98px;height:17px;box-sizing:border-box;border:1px solid;border-color:#a8a8a8 #fff #fff #a8a8a8;"></div><div class="abs" style="left:282px;top:1015px;width:98px;height:17px;box-sizing:border-box;border:1px solid;border-color:#a8a8a8 #fff #fff #a8a8a8;"></div><div class="abs" style="left:382px;top:1015px;width:98px;height:17px;box-sizing:border-box;border:1px solid;border-color:#a8a8a8 #fff #fff #a8a8a8;"></div><div class="abs" style="left:482px;top:1015px;width:98px;height:17px;box-sizing:border-box;border:1px solid;border-color:#a8a8a8 #fff #fff #a8a8a8;"></div><div class="abs" style="left:582px;top:1015px;width:1338px;height:17px;box-sizing:border-box;border:1px solid;border-color:#a8a8a8 #fff #fff #a8a8a8;"></div>
</body></html>
